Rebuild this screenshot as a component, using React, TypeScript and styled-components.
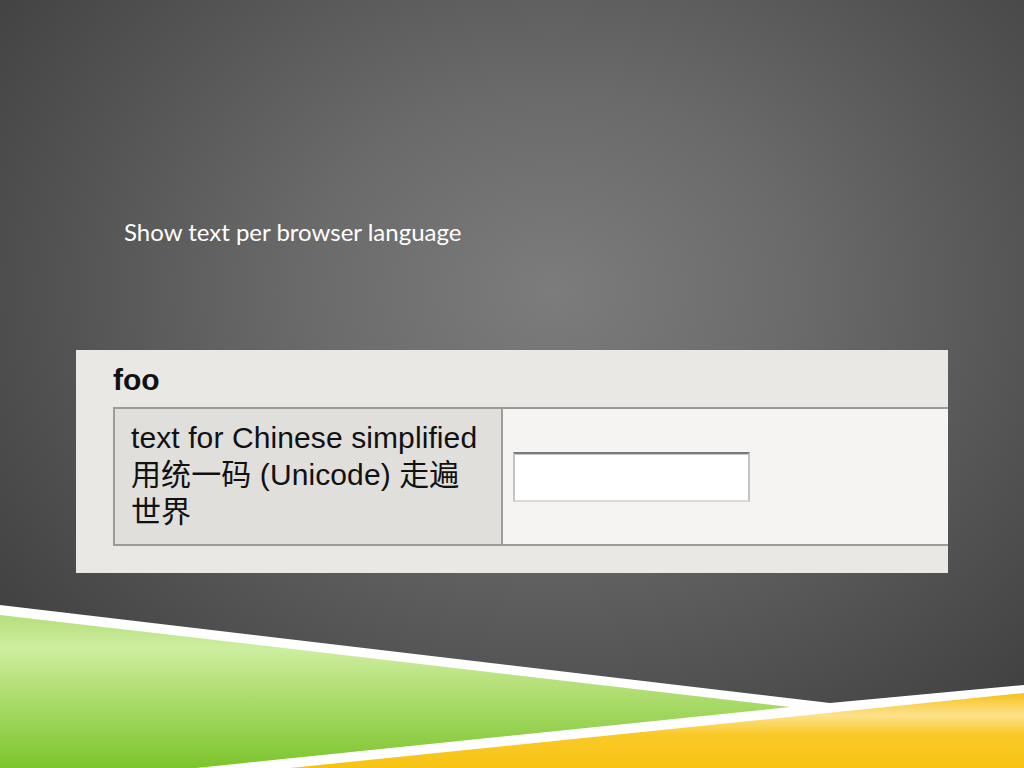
import React from "react";
import styled, { createGlobalStyle } from "styled-components";

const GlobalStyle = createGlobalStyle`
  html, body {
    margin: 0;
    padding: 0;
    background: #3a3a3a;
  }
`;

const Slide = styled.div`
  position: relative;
  width: 1024px;
  height: 768px;
  overflow: hidden;
  background: radial-gradient(
    ellipse 70% 75% at 54% 38%,
    #7c7c7c 0%,
    #6a6a6a 35%,
    #525252 70%,
    #3e3e3e 100%
  );
  display: flex;
  flex-direction: column;
`;

const Decoration = styled.svg`
  position: absolute;
  left: 0;
  top: 0;
  width: 1024px;
  height: 768px;
  pointer-events: none;
`;

const Title = styled.h1`
  position: relative;
  margin: 217px 0 0 124px;
  font-family: "Lato", "Open Sans", sans-serif;
  font-weight: 400;
  font-size: 24px;
  line-height: 30px;
  color: #ffffff;
`;

const Panel = styled.div`
  position: relative;
  margin: 103px 0 0 76px;
  width: 872px;
  padding-bottom: 27px;
  background: #e9e8e5;
  font-family: "Liberation Sans", "Noto Sans CJK SC", sans-serif;
  color: #111;
`;

const Legend = styled.div`
  height: 57px;
  padding-left: 37px;
  display: flex;
  align-items: center;
  font-weight: 700;
  font-size: 30px;
  padding-top: 3px;
  box-sizing: border-box;
`;

const Table = styled.table`
  margin-left: 37px;
  width: 835px;
  border-collapse: collapse;
  border-top: 2px solid #9c9b98;
  border-bottom: 2px solid #9c9b98;
  border-left: 2px solid #9c9b98;
`;

const Cell = styled.td<{ $label?: boolean }>`
  padding: ${(p) => (p.$label ? "10px 22px 14px 16px" : "0 10px")};
  width: ${(p) => (p.$label ? "348px" : "auto")};
  background: ${(p) => (p.$label ? "#e0dfdc" : "#f5f4f2")};
  border-right: ${(p) => (p.$label ? "2px solid #9c9b98" : "none")};
  vertical-align: middle;
  font-size: 30px;
  line-height: 37px;
  letter-spacing: 0.1px;
`;

const TextBox = styled.input`
  display: block;
  box-sizing: border-box;
  width: 237px;
  height: 50px;
  margin: 0;
  padding: 0 6px;
  background: #ffffff;
  border-style: solid;
  border-width: 2px;
  border-color: #7a7a7a #c4c4c4 #d8d8d8 #c4c4c4;
  box-shadow: inset 0 1px 0 #c8c8c8;
  outline: none;
  font-family: "Liberation Sans", sans-serif;
  font-size: 16px;
`;

function App() {
  return (
    <>
      <GlobalStyle />
      <Slide>
        <Decoration viewBox="0 0 1024 768">
          <defs>
            <linearGradient id="green" x1="0" y1="615" x2="0" y2="768" gradientUnits="userSpaceOnUse">
              <stop offset="0" stopColor="#b5df7c" />
              <stop offset="0.22" stopColor="#cdeea0" />
              <stop offset="0.45" stopColor="#b6e07a" />
              <stop offset="1" stopColor="#7cc52c" />
            </linearGradient>
            <linearGradient id="yellow" x1="0" y1="693" x2="0" y2="768" gradientUnits="userSpaceOnUse">
              <stop offset="0" stopColor="#f7c21c" />
              <stop offset="0.3" stopColor="#fde28c" />
              <stop offset="0.55" stopColor="#f9c928" />
              <stop offset="1" stopColor="#f7c414" />
            </linearGradient>
          </defs>
          <polygon points="0,605 830,703 1024,685 1024,768 0,768" fill="#ffffff" />
          <polygon points="0,615 790,707 196,768 0,768" fill="url(#green)" />
          <polygon points="290,768 1024,693 1024,768" fill="url(#yellow)" />
        </Decoration>

        <Title>Show text per browser language</Title>

        <Panel>
          <Legend>foo</Legend>
          <Table>
            <tbody>
              <tr>
                <Cell $label>text for Chinese simplified 用统一码 (Unicode) 走遍世界</Cell>
                <Cell>
                  <TextBox type="text" />
                </Cell>
              </tr>
            </tbody>
          </Table>
        </Panel>
      </Slide>
    </>
  );
}

export default App;
